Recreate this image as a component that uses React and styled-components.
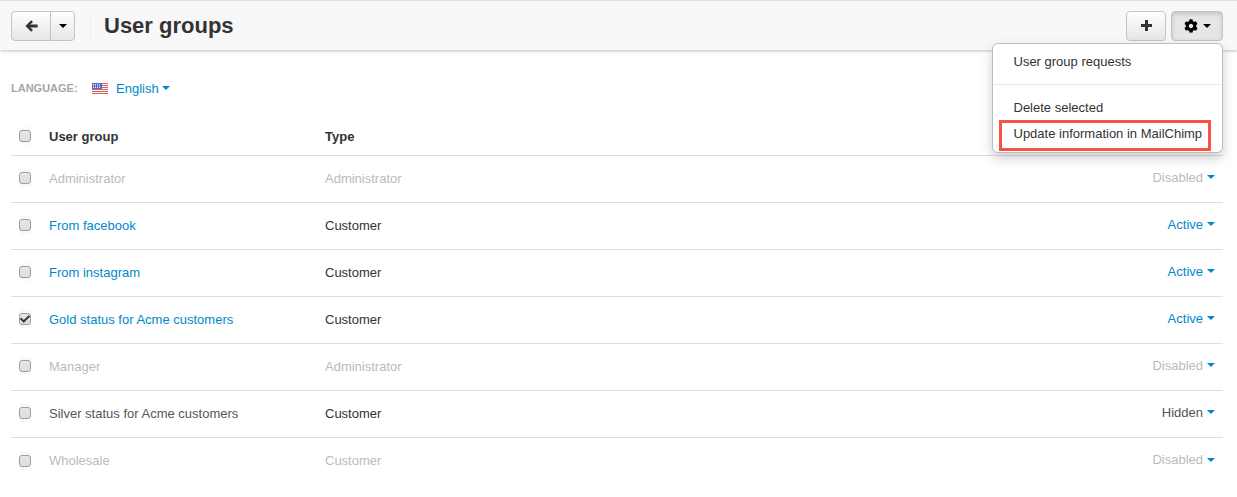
import React from 'react'
import styled, { createGlobalStyle } from 'styled-components'
import { FaCog, FaCheck } from 'react-icons/fa'

const GlobalStyle = createGlobalStyle`
    html, body {
        margin: 0;
        padding: 0;
        background: #fff;
        font-family: "Liberation Sans", Arial, sans-serif;
        font-size: 13px;
        color: #333;
    }
`

const Page = styled.div`
    position: relative;
    width: 1237px;
    height: 497px;
    overflow: hidden;
`

const Toolbar = styled.header`
    box-sizing: border-box;
    height: 50px;
    display: flex;
    align-items: center;
    padding: 0 14px 0 11px;
    background: #f8f8f8;
    border-top: 1px solid #dcdcdc;
    box-shadow: 0 1px 3px rgba(0, 0, 0, 0.25);
`

const BtnGroup = styled.div`
    display: flex;
`

const ToolButton = styled.button`
    box-sizing: border-box;
    height: 30px;
    width: ${props => props.$width}px;
    margin-left: ${props => props.$gap || 0}px;
    padding: 0;
    display: flex;
    align-items: center;
    justify-content: center;
    gap: 5px;
    color: #333;
    background: ${props => props.$open ? '#e6e6e6' : 'linear-gradient(#fff, #e6e6e6)'};
    border: 1px solid #c4c4c4;
    border-radius: ${props => props.$radius || '4px'};
    box-shadow: ${props => props.$open ? 'inset 0 2px 4px rgba(0,0,0,.15)' : 'inset 0 1px 0 rgba(255,255,255,.2)'};
`

const SplitButton = styled(ToolButton)`
    margin-left: -1px;
`

const Caret = styled.span`
    display: inline-block;
    width: 0;
    height: 0;
    border-left: 4px solid transparent;
    border-right: 4px solid transparent;
    border-top: 4px solid ${props => props.$color || '#000'};
    margin-left: ${props => props.$gap || 0}px;
`

const Divider = styled.div`
    width: 1px;
    height: 26px;
    margin: 0 13px 0 15px;
    background: #efefef;
`

const Title = styled.h1`
    margin: 0;
    flex: 1;
    font-size: 22px;
    line-height: 26px;
    font-weight: bold;
    color: #333;
`

const Content = styled.main`
    padding: 0 14px 0 11px;
`

const LanguageRow = styled.div`
    display: flex;
    align-items: center;
    height: 24px;
    margin: 26px 0 19px;
`

const LanguageLabel = styled.span`
    width: 81px;
    font-size: 11px;
    font-weight: bold;
    color: #a6a6a6;
`

const LanguageLink = styled.a`
    display: flex;
    align-items: center;
    color: #0088cc;
`

const Flag = styled.svg`
    width: 16px;
    height: 11px;
    margin-right: 8px;
`

const Row = styled.div`
    box-sizing: border-box;
    height: ${props => props.$height || 47}px;
    display: grid;
    grid-template-columns: 38px 276px 1fr auto;
    align-items: center;
    border-bottom: ${props => props.$last ? 'none' : '1px solid #dfdfdf'};
    padding: 0 8px 2px 0;
    color: ${props => props.$muted ? '#bbb' : '#333'};
`

const HeadRow = styled(Row)`
    font-weight: bold;
    color: #333;
`

const BoxCell = styled.div`
    display: flex;
    padding-left: 8px;
`

const CheckBox = styled.span`
    box-sizing: border-box;
    width: 12px;
    height: 12px;
    display: flex;
    align-items: center;
    justify-content: center;
    background: linear-gradient(#e6e6e6, #dedede);
    border: 1px solid #9e9e9e;
    border-radius: 3px;
    color: #333;
    box-shadow: 0 -3px 0 #f8f8f8, 0 3px 0 #f8f8f8;
`

const Name = styled.span`
    color: ${props => props.$tone || 'inherit'};
`

const Status = styled.span`
    display: flex;
    align-items: center;
    margin-top: -2px;
    color: ${props => props.$tone};
`

const Menu = styled.div`
    position: absolute;
    top: 43px;
    right: 14px;
    box-sizing: border-box;
    width: 231px;
    height: 110px;
    padding: 5px 0;
    background: #fff;
    border: 1px solid #bdbdbd;
    border-radius: 6px;
    box-shadow: 0 5px 12px rgba(0, 0, 0, 0.2);
    color: #333;
`

const MenuItem = styled.div`
    height: 26px;
    line-height: 26px;
    padding-left: 20.5px;
`

const MenuDivider = styled.div`
    height: 1px;
    margin: 9px 1px 10px;
    background: #e5e5e5;
`

const Highlight = styled.div`
    position: absolute;
    top: 76px;
    left: 6px;
    box-sizing: border-box;
    width: 212px;
    height: 31px;
    border: 3px solid #f9504a;
`

const groups = [
    { name: 'Administrator', type: 'Administrator', status: 'Disabled', muted: true },
    { name: 'From facebook', type: 'Customer', status: 'Active', tone: '#0088cc' },
    { name: 'From instagram', type: 'Customer', status: 'Active', tone: '#0088cc' },
    { name: 'Gold status for Acme customers', type: 'Customer', status: 'Active', tone: '#0088cc', checked: true },
    { name: 'Manager', type: 'Administrator', status: 'Disabled', muted: true },
    { name: 'Silver status for Acme customers', type: 'Customer', status: 'Hidden', tone: '#555' },
    { name: 'Wholesale', type: 'Customer', status: 'Disabled', muted: true },
]

const statusTone = { Active: '#0088cc', Disabled: '#bbb', Hidden: '#555' }

function UsFlag() {
    return (
        <Flag viewBox="0 0 16 11">
            <rect width="16" height="11" fill="#f4f4f4" />
            {[0, 2, 4, 6, 8, 10].map(y => <rect key={y} y={y} width="16" height="1" fill="#d9635f" />)}
            <rect width="10" height="6" fill="#5568c4" />
            <path d="M1 1.5h8M1 3h8M1 4.5h8" stroke="#e4e8f8" strokeDasharray="1 1" />
        </Flag>
    )
}

// thick FontAwesome 3 style arrow, the package's one is too thin
function BackArrow() {
    return (
        <svg width="13" height="12" viewBox="0 0 13 12">
            <path d="M6.2 0.2 L0.4 6 L6.2 11.8 L8 10 L5.3 7.6 H12.6 V4.4 H5.3 L8 2 Z" fill="#333" />
        </svg>
    )
}

function ThickPlus() {
    return (
        <svg width="11" height="11" viewBox="0 0 11 11">
            <path d="M4 0h3v4h4v3H7v4H4V7H0V4h4z" fill="#333" />
        </svg>
    )
}

export default function App() {
    return (
        <Page>
            <GlobalStyle />
            <Toolbar>
                <BtnGroup>
                    <ToolButton $width={40} $radius="4px 0 0 4px"><BackArrow /></ToolButton>
                    <SplitButton $width={25} $radius="0 4px 4px 0"><Caret /></SplitButton>
                </BtnGroup>
                <Divider />
                <Title>User groups</Title>
                <ToolButton $width={40}><ThickPlus /></ToolButton>
                <ToolButton $width={52} $gap={5} $open><FaCog size={14} color="#000" /><Caret /></ToolButton>
            </Toolbar>
            <Content>
                <LanguageRow>
                    <LanguageLabel>LANGUAGE:</LanguageLabel>
                    <LanguageLink><UsFlag />English<Caret $color="#0088cc" $gap={3} /></LanguageLink>
                </LanguageRow>
                <HeadRow $height={37}>
                    <BoxCell><CheckBox /></BoxCell>
                    <span>User group</span>
                    <span>Type</span>
                    <span />
                </HeadRow>
                {groups.map((g, i) => (
                    <Row key={g.name} $muted={g.muted} $last={i === groups.length - 1}>
                        <BoxCell><CheckBox>{g.checked && <FaCheck size={10} />}</CheckBox></BoxCell>
                        <Name $tone={g.tone}>{g.name}</Name>
                        <span>{g.type}</span>
                        <Status $tone={statusTone[g.status]}>{g.status}<Caret $color="#0088cc" $gap={4} /></Status>
                    </Row>
                ))}
            </Content>
            <Menu>
                <MenuItem>User group requests</MenuItem>
                <MenuDivider />
                <MenuItem>Delete selected</MenuItem>
                <MenuItem>Update information in MailChimp</MenuItem>
                <Highlight />
            </Menu>
        </Page>
    )
}
